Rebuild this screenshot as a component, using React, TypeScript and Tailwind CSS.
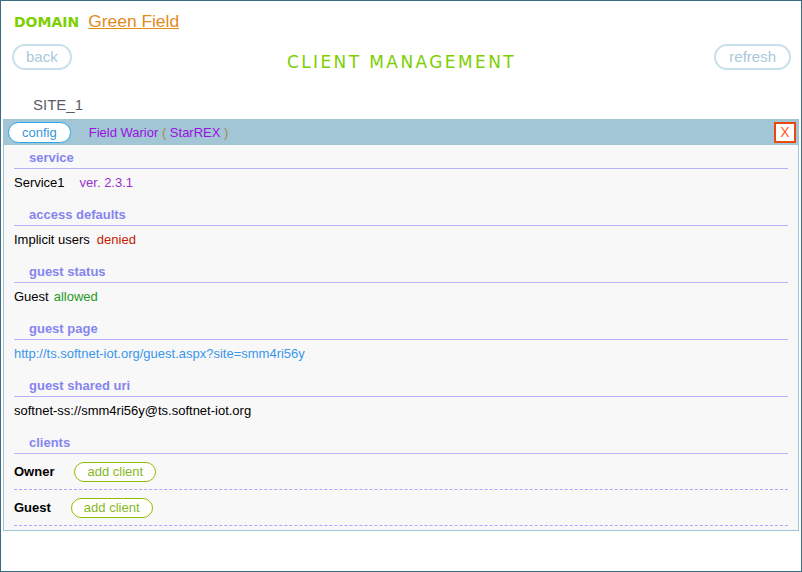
const verdana = { fontFamily: '"DejaVu Sans", Verdana, sans-serif' };

function Section({ title, children }: { title: string; children: React.ReactNode }) {
  return (
    <div>
      <div className="border-b border-[#b3b3f5] pb-[2px] pl-[15px] text-[13px] font-bold leading-[16px] text-[#8585ee]">
        {title}
      </div>
      <div className="mt-[6px]">{children}</div>
    </div>
  );
}

function ClientRow({ label }: { label: string }) {
  return (
    <div className="flex items-center border-b border-dashed border-[#a8a8ff] pt-[8px] pb-[7px]">
      <span className="mr-5 text-[13px] font-bold leading-[16px] text-black">{label}</span>
      <button className="flex h-[20px] items-center rounded-full border border-[#8cc000] bg-white px-[12px] text-[13px] leading-[16px] text-[#86b81e]">
        add client
      </button>
    </div>
  );
}

export default function App() {
  return (
    <div
      className="h-[572px] w-[802px] overflow-hidden border border-[#3b6d80] bg-white"
      style={{ fontFamily: '"Liberation Sans", Arial, sans-serif' }}
    >
      {/* domain line */}
      <div className="flex items-baseline pl-[13px] pt-[10px]">
        <span className="text-[14px] font-bold leading-[20px] text-[#7ccf00]" style={verdana}>
          DOMAIN
        </span>
        <a className="ml-[9px] text-[17.4px] leading-[20px] text-[#e08c1a] underline">Green Field</a>
      </div>

      {/* nav row */}
      <div className="mt-[12px] grid grid-cols-[1fr_auto_1fr] items-start pl-[11px] pr-[10px]">
        <div>
          <button className="flex h-[26px] items-center rounded-full border-2 border-[#c8e0ea] px-[12px] text-[15px] text-[#a9c9d9]">
            back
          </button>
        </div>
        <div
          className="mt-[8px] text-[17px] leading-[20px] tracking-[2.4px] text-[#7ccf00]"
          style={verdana}
        >
          CLIENT MANAGEMENT
        </div>
        <div className="flex justify-end">
          <button className="flex h-[26px] items-center rounded-full border-2 border-[#c8e0ea] px-[13px] text-[15px] text-[#a9c9d9]">
            refresh
          </button>
        </div>
      </div>

      <div className="mt-[24px] pl-[32px] text-[15px] leading-[18px] text-[#5a5d68]">SITE_1</div>

      {/* site panel */}
      <div className="mx-[2px] mt-[5px] border border-[#a0c4d4] bg-[#f8f8f8] pb-[4px]">
        <div className="flex h-[25px] items-center bg-[#a2c6d6] pl-[4px] pr-[2px]">
          <button className="flex h-[21px] items-center rounded-full border-[1.5px] border-[#2aa8e8] bg-white px-[13px] text-[13px] text-[#3a98d6]">
            config
          </button>
          <span className="ml-[18px] text-[13px] text-[#9a10e0]">
            Field Warior <span className="text-[#a08a50]">(</span> StarREX{' '}
            <span className="text-[#a08a50]">)</span>
          </span>
          <button className="ml-auto flex h-[21px] w-[22px] items-center justify-center border-2 border-[#e84a10] bg-white text-[14px] text-[#ff5a20]">
            X
          </button>
        </div>

        <div className="flex flex-col gap-4 px-[10px] pt-[5px] text-[13px] leading-[16px] text-black">
          <Section title="service">
            Service1<span className="ml-[15px] text-[#9b30d0]">ver. 2.3.1</span>
          </Section>
          <Section title="access defaults">
            Implicit users<span className="ml-[7px] text-[#c41a00]">denied</span>
          </Section>
          <Section title="guest status">
            Guest<span className="ml-[5px] text-[#1f9a1f]">allowed</span>
          </Section>
          <Section title="guest page">
            <a className="text-[#3a96ec]">http://ts.softnet-iot.org/guest.aspx?site=smm4ri56y</a>
          </Section>
          <Section title="guest shared uri">softnet-ss://smm4ri56y@ts.softnet-iot.org</Section>
          <div>
            <div className="border-b border-[#b3b3f5] pb-[2px] pl-[15px] text-[13px] font-bold leading-[16px] text-[#8585ee]">
              clients
            </div>
            <ClientRow label="Owner" />
            <ClientRow label="Guest" />
          </div>
        </div>
      </div>
    </div>
  );
}
